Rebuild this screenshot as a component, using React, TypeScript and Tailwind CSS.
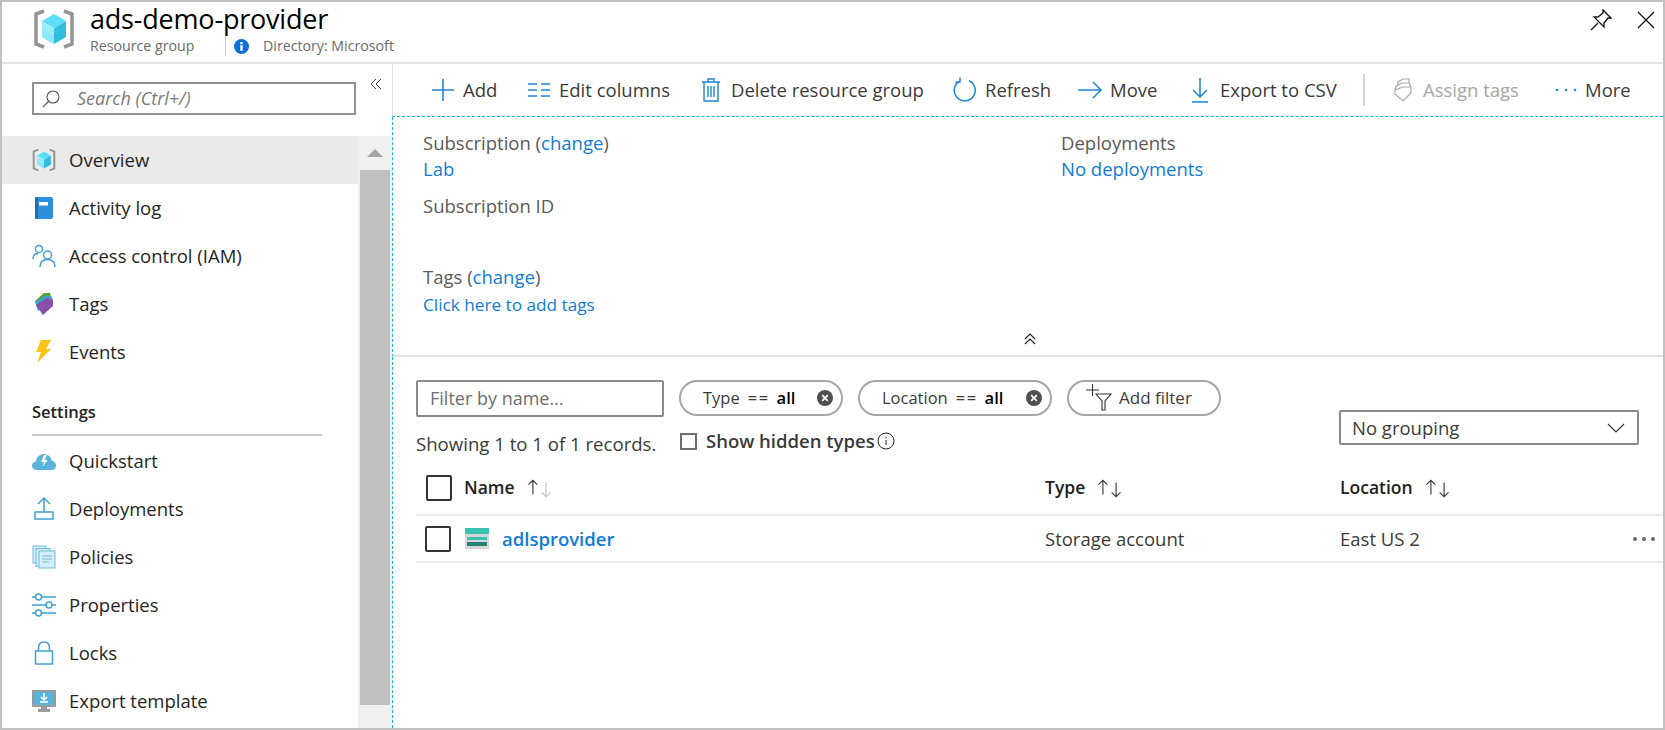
import React from 'react';

const Cube = ({ s }: { s: number }) => (
  <svg width={s} height={s} viewBox="0 0 42 42" className="shrink-0">
    <path d="M11 3 L3 6 V36 L11 39" fill="none" stroke="#949494" strokeWidth="3.5" />
    <path d="M31 3 L39 6 V36 L31 39" fill="none" stroke="#949494" strokeWidth="3.5" />
    <path d="M21 6 L33 13 L21 20.5 L9 13 Z" fill="#5be0f7" />
    <path d="M9 13 L21 20.5 V36 L9 29 Z" fill="#9cebfc" />
    <path d="M33 13 L21 20.5 V36 L33 29 Z" fill="#32bedd" />
    <path d="M9 21 L21 28 V36 L9 29 Z" fill="#8ae8fb" />
  </svg>
);

const I = ({ children }: { children: React.ReactNode }) => (
  <svg width="24" height="24" viewBox="0 0 24 24" fill="none" className="shrink-0">{children}</svg>
);
const b = '#3f9fd3';

const navIcons: Record<string, React.ReactNode> = {
  Overview: <Cube s={24} />,
  'Activity log': <I><rect x="3" y="1" width="18" height="22" rx="2" fill="#2f8fdc" /><rect x="3" y="1" width="3" height="22" rx="1" fill="#1f6fb5" /><rect x="7" y="6" width="9" height="3.5" fill="#fff" /></I>,
  'Access control (IAM)': <I><circle cx="7" cy="5" r="3.6" stroke={b} strokeWidth="1.5" /><circle cx="15.5" cy="11" r="4" stroke={b} strokeWidth="1.5" /><path d="M1 15 C1 11 3 9.5 6 9.5" stroke={b} strokeWidth="1.5" /><path d="M8 23 C8 18 11 15.5 15.5 15.5 C20 15.5 23 18 23 23" stroke={b} strokeWidth="1.5" /></I>,
  Tags: <I><path d="M3 9 L12 1 L18 1 L19 5 L6 15 Z" fill="#59a11c" /><path d="M3 10 L14 3 L20 5 L21 9 L6 19 Z" fill="#3f9fd3" /><path d="M4 13 L15 6 L21 8 L21 14 L11 23 Z" fill="#8a4fa8" /></I>,
  Events: <I><path d="M9 0 H19 L14 9 H19 L5 23 L9 12 H4 Z" fill="#fcc419" /></I>,
  Quickstart: <I><path d="M6 21 C2 21 0 19 0 16.5 C0 14 2 12.5 4 12.5 C4 8 8 5 12 5 C16 5 19 8 19.5 11.5 C22 12 24 14 24 16.5 C24 19 22 21 19 21 Z" fill="#5ab4dc" /><path d="M12 6 L9 13 H12 L10.5 18 L15.5 11 H12.5 L15 6 Z" fill="#fff" /></I>,
  Deployments: <I><path d="M12 1 V15 M6 7 L12 1 L18 7" stroke={b} strokeWidth="1.5" /><rect x="3" y="15" width="18" height="7" stroke={b} strokeWidth="1.5" /></I>,
  Policies: <I><rect x="1" y="1" width="13" height="17" fill="#d5edf7" stroke="#6dbde0" /><rect x="4" y="3.5" width="14" height="18" fill="#d5edf7" stroke="#6dbde0" /><rect x="7" y="6" width="16" height="17" fill="#d5edf7" stroke="#6dbde0" /><path d="M10 11 H20 M10 14 H20 M10 17 H17" stroke="#6dbde0" /></I>,
  Properties: <I><path d="M0 4 H24 M0 12 H24 M0 20 H24" stroke={b} strokeWidth="1.5" /><circle cx="6.5" cy="4" r="3" fill="#fff" stroke={b} strokeWidth="1.5" /><circle cx="17" cy="12" r="3" fill="#fff" stroke={b} strokeWidth="1.5" /><circle cx="6.5" cy="20" r="3" fill="#fff" stroke={b} strokeWidth="1.5" /></I>,
  Locks: <I><rect x="3.5" y="10" width="17" height="13" stroke={b} strokeWidth="1.5" /><path d="M6.5 10 V7 C6.5 3 9 1 12 1 C15 1 17.5 3 17.5 7 V10" stroke={b} strokeWidth="1.5" /></I>,
  'Export template': <I><rect x="0" y="1" width="24" height="17" rx="1" fill="#9a9a9a" /><rect x="2" y="3" width="20" height="13" fill="#5ab4dc" /><path d="M12 4 V10 M9 8 L12 11 L15 8 M8 13 H16" stroke="#fff" strokeWidth="1.5" /><path d="M9 18 H15 V20 H18 V23 H6 V20 H9 Z" fill="#9a9a9a" /></I>,
};

const NavRow = ({ label, active }: { label: string; active?: boolean }) => (
  <div className={`flex h-12 items-center pl-[30px] gap-[13px] ${active ? 'bg-[#ebeaea]' : ''}`}>
    {navIcons[label]}
    <span className="text-[18.5px] text-[#252525]">{label}</span>
  </div>
);

const TB = ({ icon, label, off, w, gap }: { icon: React.ReactNode; label: string; off?: boolean; w: string; gap?: string }) => (
  <div className={`flex items-center ${gap ?? 'gap-2'} ${w}`}>
    {icon}
    <span className={`text-[18.5px] whitespace-nowrap ${off ? 'text-[#a6a6a6]' : 'text-[#3b3b3b]'}`}>{label}</span>
  </div>
);

const c = '#1f85d8';

const Chip = ({ k, w }: { k: string; w: string }) => (
  <div className={`flex h-9 items-center justify-between rounded-full border-2 border-[#a6a6a6] pl-[22px] pr-[8px] ${w}`}>
    <span className="text-[16.5px] text-[#3b3b3b] whitespace-pre">{k}<span className="ml-[8px] mr-[7px] tracking-[1.5px]">==</span><b className="text-black font-semibold">all</b></span>
    <svg width="16" height="16" viewBox="0 0 16 16"><circle cx="8" cy="8" r="8" fill="#505050" /><path d="M5.2 5.2 L10.8 10.8 M10.8 5.2 L5.2 10.8" stroke="#fff" strokeWidth="1.7" /></svg>
  </div>
);

const Sort = ({ dim }: { dim?: boolean }) => (
  <svg width="29" height="22" viewBox="0 0 26 20" fill="none">
    <path d="M7 16 V3 M3 7 L7 3 L11 7" stroke="#333" strokeWidth="1" />
    <path d="M19 5 V18 M15 14 L19 18 L23 14" stroke={dim ? '#bdbdbd' : '#333'} strokeWidth="1" />
  </svg>
);

const Box = ({ cn }: { cn: string }) => <div className={`box-border rounded-[2px] border-2 border-[#333] ${cn}`} />;

export default function App() {
  return (
    <div className="box-border h-[730px] w-[1665px] overflow-hidden border-2 border-[#c0c0c0] bg-white font-['Open_Sans','Liberation_Sans',sans-serif]">
      {/* header */}
      <header className="flex h-[62px] items-start border-b-2 border-[#e2e2e2]">
        <div className="ml-[31px] mt-[6px]"><Cube s={42} /></div>
        <div className="ml-[15px] flex flex-col">
          <h1 className="text-[27px] leading-[34px] text-black font-normal tracking-[-0.2px]">ads-demo-provider</h1>
          <div className="flex items-center text-[14.2px] leading-[16px] text-[#6b6b6b]">
            <span className="w-[104px] whitespace-nowrap">Resource group</span>
            <span className="ml-[31px] h-[20px] w-px bg-[#cfcfcf]" />
            <svg className="ml-[8px]" width="15" height="15" viewBox="0 0 15 15"><circle cx="7.5" cy="7.5" r="7.5" fill="#0a6fd6" /><rect x="6.3" y="6.2" width="2.4" height="5.6" fill="#fff" /><rect x="6.3" y="3" width="2.4" height="2.2" fill="#fff" /></svg>
            <span className="ml-[14px]">Directory: Microsoft</span>
          </div>
        </div>
        <div className="ml-auto mr-[7px] mt-[7px] flex items-center gap-[24px]">
          <svg width="22" height="22" viewBox="0 0 22 22" fill="none" stroke="#111" strokeWidth="1.3"><path d="M1 21 L8 14 M13 1 L21 9 L18 9 L14 14 L14 18 L4 8 L8 8 L13 4 Z" /></svg>
          <svg width="20" height="20" viewBox="0 0 20 20" fill="none" stroke="#111" strokeWidth="1.2"><path d="M2 2 L18 18 M18 2 L2 18" /></svg>
        </div>
      </header>

      <div className="flex h-[664px]">
        {/* sidebar */}
        <aside className="flex w-[390px] shrink-0 flex-col">
          <div className="relative h-[72px] shrink-0">
            <div className="ml-[30px] mt-[18px] flex h-[33px] w-[324px] items-center border-2 border-[#919191] pl-[7px]">
              <svg width="20" height="20" viewBox="0 0 20 20" fill="none" stroke="#555" strokeWidth="1.1"><circle cx="12" cy="8" r="6" /><path d="M8 12 L2 18" /></svg>
              <span className="ml-[16px] text-[18px] italic text-[#7a7a7a]">Search (Ctrl+/)</span>
            </div>
            <svg className="absolute left-[367px] top-[13px]" width="14" height="14" viewBox="0 0 14 14" fill="none" stroke="#444"><path d="M7 2 L2 7 L7 12 M12 2 L7 7 L12 12" /></svg>
          </div>
          <div className="flex min-h-0 flex-1">
            <nav className="w-[356px]">
              <NavRow label="Overview" active />
              <NavRow label="Activity log" />
              <NavRow label="Access control (IAM)" />
              <NavRow label="Tags" />
              <NavRow label="Events" />
              <div className="mb-[1px] ml-[30px] mt-[16px] w-[290px] border-b-2 border-[#c8c8c8] pb-[10px] pt-[8px] text-[16.5px] font-semibold leading-[24px] text-[#222]">Settings</div>
              <NavRow label="Quickstart" />
              <NavRow label="Deployments" />
              <NavRow label="Policies" />
              <NavRow label="Properties" />
              <NavRow label="Locks" />
              <NavRow label="Export template" />
            </nav>
            <div className="flex w-[34px] flex-col bg-[#f0f0f0] px-[2px]">
              <div className="flex h-[34px] shrink-0 items-center justify-center">
                <div className="h-0 w-0 border-x-[8px] border-b-[8px] border-x-transparent border-b-[#a6a6a6]" />
              </div>
              <div className="h-[535px] bg-[#c0c0c0]" />
            </div>
          </div>
        </aside>

        {/* main */}
        <main className="flex min-w-0 flex-1 flex-col">
          <div className="flex h-[53px] shrink-0 items-center border-b border-l border-b-[#19b5e5] border-l-[#dcdcdc] border-dashed pl-[38px] [border-left-style:solid]">
            <TB w="w-[96px]" label="Add" icon={<svg width="24" height="24" viewBox="0 0 24 24" fill="none" stroke={c} strokeWidth="1.6"><path d="M12 1 V23 M1 12 H23" /></svg>} />
            <TB w="w-[174px]" label="Edit columns" icon={<svg width="24" height="24" viewBox="0 0 24 24" fill="none" stroke={c} strokeWidth="1.5"><path d="M1 6 H10 M1 12 H10 M1 18 H10 M14 6 H23 M14 12 H23 M14 18 H23" /></svg>} />
            <TB w="w-[252px]" gap="gap-[10px]" label="Delete resource group" icon={<svg width="20" height="24" viewBox="0 0 20 24" fill="none" stroke={c} strokeWidth="1.4"><path d="M1 4 H19 M7 4 V1 H13 V4 M3 4 V23 H17 V4 M7 8 V19 M10 8 V19 M13 8 V19" /></svg>} />
            <TB w="w-[125px]" label="Refresh" icon={<svg width="24" height="26" viewBox="0 0 24 26" fill="none" stroke={c} strokeWidth="1.5"><path d="M7 4 A10.5 10.5 0 1 0 16 3.8 M7 0.5 V5 H2.5" /></svg>} />
            <TB w="w-[112px]" label="Move" icon={<svg width="24" height="24" viewBox="0 0 24 24" fill="none" stroke={c} strokeWidth="1.5"><path d="M0 12 H23 M15 4 L23 12 L15 20" /></svg>} />
            <TB w="w-[173px]" gap="gap-[10px]" label="Export to CSV" icon={<svg width="20" height="26" viewBox="0 0 20 26" fill="none" stroke={c} strokeWidth="1.5"><path d="M10 1 V20 M3 13 L10 20 L17 13 M2 25 H18" /></svg>} />
            <div className="h-[32px] w-0.5 bg-[#d4d4d4]" />
            <div className="ml-[28px]"><TB w="w-[161px]" gap="gap-[10px]" off label="Assign tags" icon={<svg width="20" height="24" viewBox="0 0 20 24" fill="none" stroke="#a6a6a6" strokeWidth="1.2"><path d="M2 12 L2 16 L10 23 L18 15 L18 9 L10 9 Z M2 12 L3 8 L9 5 L16 5 L18 9 M4 8 L5 4 L10 1 L16 1 L16 5" /></svg>} /></div>
            <TB w="w-[90px]" gap="gap-[7px]" label="More" icon={<svg width="24" height="6" viewBox="0 0 24 6" fill={c}><circle cx="3" cy="3" r="1.3" /><circle cx="12" cy="3" r="1.3" /><circle cx="21" cy="3" r="1.3" /></svg>} />
          </div>

          {/* essentials */}
          <section className="relative h-[240px] shrink-0 border-b-2 border-l border-b-[#e2e2e2] border-l-[#19b5e5] [border-left-style:dashed]">
            <div className="grid grid-cols-[638px_1fr] pl-[30px] pt-[13px] text-[18.5px] leading-[26px] text-[#5a5a5a]">
              <div>
                <div>Subscription (<span className="text-[#0f7cd6]">change</span>)</div>
                <div className="text-[#0f7cd6]">Lab</div>
                <div className="mt-[11px]">Subscription ID</div>
                <div className="mt-[45px]">Tags (<span className="text-[#0f7cd6]">change</span>)</div>
                <div className="mt-[2px] text-[17.2px] text-[#0f7cd6]">Click here to add tags</div>
              </div>
              <div>
                <div>Deployments</div>
                <div className="text-[#0f7cd6]">No deployments</div>
              </div>
            </div>
            <svg className="absolute left-[630px] top-[215px]" width="14" height="14" viewBox="0 0 14 14" fill="none" stroke="#222" strokeWidth="1.2"><path d="M2 7 L7 2 L12 7 M2 12 L7 7 L12 12" /></svg>
          </section>

          {/* list */}
          <section className="min-h-0 flex-1 border-l border-dashed border-l-[#19b5e5] pl-[23px]">
            <div className="mt-[23px] flex gap-[15px]">
              <div className="box-border flex h-[37px] w-[248px] items-center rounded-[2px] border-2 border-[#8a8a8a] pl-[12px] text-[18px] text-[#6e6e6e]">Filter by name...</div>
              <Chip k="Type" w="w-[164px]" />
              <Chip k="Location" w="w-[194px]" />
              <div className="flex h-9 w-[154px] items-center rounded-full border-2 border-[#a6a6a6] pl-[16px]">
                <svg width="30" height="30" viewBox="0 0 30 30" fill="none" stroke="#333" strokeWidth="1.1"><path d="M1 7 H14 M7.5 1 V13 M11 11 H26 L20 18 V27 H17 V18 Z" /></svg>
                <span className="ml-[4px] text-[17px] text-[#3b3b3b] whitespace-nowrap">Add filter</span>
              </div>
            </div>
            <div className="flex">
              <div className="mt-[15px] w-[264px] whitespace-nowrap text-[18.6px] leading-[24px] text-[#3b3b3b]">Showing 1 to 1 of 1 records.</div>
              <div className="mt-[12px] flex h-[24px] items-center">
                <div className="box-border h-[17px] w-[17px] border-2 border-[#6e6e6e]" />
                <span className="ml-[9px] whitespace-nowrap text-[18.5px] font-semibold text-[#3b3b3b]">Show hidden types</span>
                <svg className="ml-[2px]" width="18" height="18" viewBox="0 0 18 18" fill="none" stroke="#222"><circle cx="9" cy="9" r="8" /><path d="M9 8 V13 M9 5 V6.5" /></svg>
              </div>
              <div className="ml-auto mr-[24px] -mt-[7px] box-border flex h-[35px] w-[300px] items-center justify-between rounded-[2px] border-2 border-[#8a8a8a] pl-[11px] pr-[12px] text-[18.5px] text-[#3b3b3b]">
                No grouping
                <svg width="18" height="10" viewBox="0 0 18 10" fill="none" stroke="#333" strokeWidth="1.1"><path d="M1 1 L9 9 L17 1" /></svg>
              </div>
            </div>
            <div className="mt-[5px] grid h-[55px] grid-cols-[629px_295px_1fr] items-center border-b-2 border-[#ebebeb] text-[17.5px] font-semibold text-[#222]">
              <div className="flex items-center pl-[10px]">
                <Box cn="h-[26px] w-[26px]" />
                <span className="ml-[12px]">Name</span><span className="ml-[10px]"><Sort dim /></span>
              </div>
              <div className="flex items-center">Type<span className="ml-[10px]"><Sort /></span></div>
              <div className="flex items-center">Location<span className="ml-[10px]"><Sort /></span></div>
            </div>
            <div className="grid h-[47px] grid-cols-[629px_295px_1fr] items-center border-b-2 border-[#ebebeb] text-[18.5px] text-[#3b3b3b]">
              <div className="flex items-center pl-[9px]">
                <Box cn="h-[26px] w-[26px]" />
                <svg className="ml-[14px]" width="24" height="24" viewBox="0 0 24 24"><rect y="2" width="24" height="20" fill="#d6d6d6" /><rect y="1" width="24" height="6" fill="#37c2b1" /><rect x="2" y="10" width="20" height="3" fill="#37c2b1" /><rect x="2" y="15" width="20" height="4" fill="#258277" /></svg>
                <span className="ml-[13px] font-semibold text-[#0f7cd6]">adlsprovider</span>
              </div>
              <div>Storage account</div>
              <div className="flex items-center justify-between pr-[7px]">
                <span>East US 2</span>
                <svg width="24" height="6" viewBox="0 0 24 6" fill="#666"><circle cx="3" cy="3" r="2" /><circle cx="12" cy="3" r="2" /><circle cx="21" cy="3" r="2" /></svg>
              </div>
            </div>
          </section>
        </main>
      </div>
    </div>
  );
}
